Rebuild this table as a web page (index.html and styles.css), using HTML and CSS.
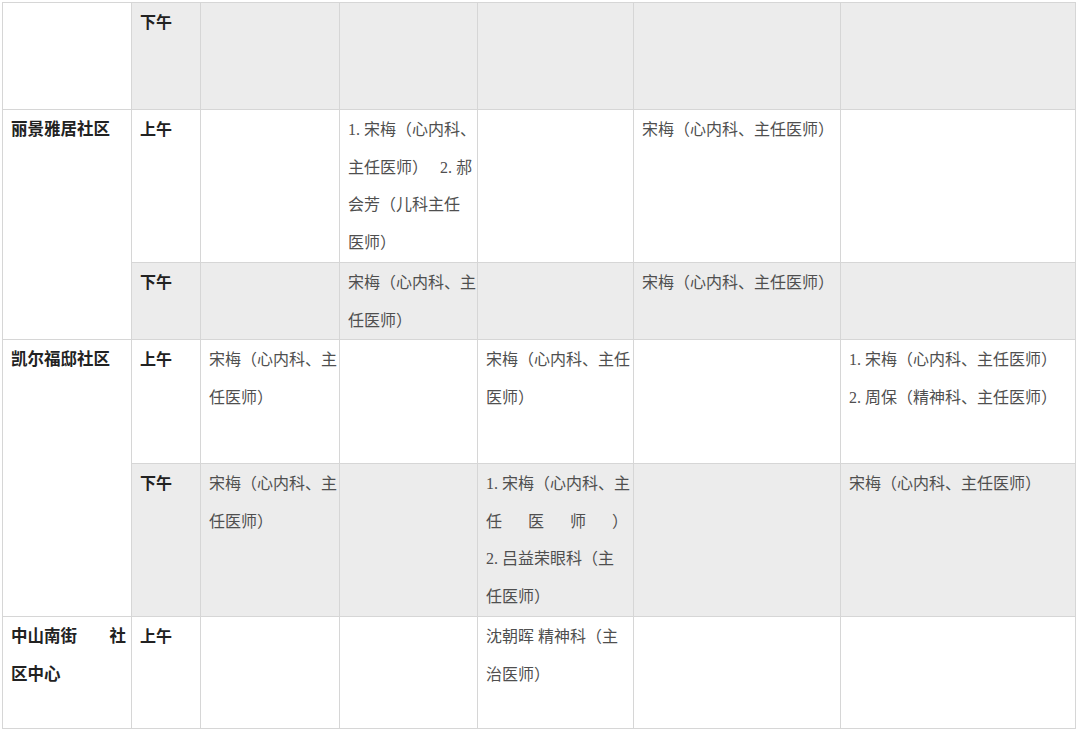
FILE: index.html
```html
<!DOCTYPE html>
<html lang="zh-CN">
<head>
<meta charset="utf-8">
<title>排班表</title>
<link rel="stylesheet" href="styles.css">
</head>
<body>
<table class="sched">
  <colgroup>
    <col class="c1"><col class="c2"><col class="c3"><col class="c4"><col class="c5"><col class="c6"><col class="c7">
  </colgroup>
  <tbody>
    <tr class="r1 pm">
      <td class="blank"></td>
      <td class="half">下午</td>
      <td></td><td></td><td></td><td></td><td></td>
    </tr>
    <tr class="r2">
      <td class="name" rowspan="2">丽景雅居社区</td>
      <td class="half">上午</td>
      <td></td>
      <td>1. 宋梅（心内科、<br><span class="spread"><span>主任医师）</span><span>2. 郝</span></span>会芳（儿科主任<br>医师）</td>
      <td></td>
      <td>宋梅（心内科、主任医师）</td>
      <td></td>
    </tr>
    <tr class="r3 pm">
      <td class="half">下午</td>
      <td></td>
      <td>宋梅（心内科、主<br>任医师）</td>
      <td></td>
      <td>宋梅（心内科、主任医师）</td>
      <td></td>
    </tr>
    <tr class="r4">
      <td class="name" rowspan="2">凯尔福邸社区</td>
      <td class="half">上午</td>
      <td>宋梅（心内科、主<br>任医师）</td>
      <td></td>
      <td>宋梅（心内科、主任<br>医师）</td>
      <td></td>
      <td>1. 宋梅（心内科、主任医师）<br>2. 周保（精神科、主任医师）</td>
    </tr>
    <tr class="r5 pm">
      <td class="half">下午</td>
      <td>宋梅（心内科、主<br>任医师）</td>
      <td></td>
      <td>1. 宋梅（心内科、主<br><span class="spread"><span>任</span><span>医</span><span>师</span><span>）</span></span>2. 吕益荣眼科（主<br>任医师）</td>
      <td></td>
      <td>宋梅（心内科、主任医师）</td>
    </tr>
    <tr class="r6">
      <td class="name"><span class="spread"><span>中山南街</span><span>社</span></span>区中心</td>
      <td class="half">上午</td>
      <td></td>
      <td></td>
      <td>沈朝晖 精神科（主<br>治医师）</td>
      <td></td>
      <td></td>
    </tr>
  </tbody>
</table>
</body>
</html>
```

FILE: styles.css
```css
html, body {
  margin: 0;
  padding: 0;
  background: #ffffff;
}

.sched {
  margin: 2px 0 0 2px;
  width: 1073px;
  table-layout: fixed;
  border-collapse: collapse;
  font-family: "Liberation Serif", "Noto Sans CJK SC", serif;
  font-size: 16px;
  line-height: 37.5px;
  color: #4f4f4f;
  text-spacing-trim: space-all;
}

.c1 { width: 129px; }
.c2 { width: 69px; }
.c3 { width: 139px; }
.c4 { width: 138px; }
.c5 { width: 156px; }
.c6 { width: 207px; }
.c7 { width: 235px; }

.sched td {
  border: 1px solid #d6d6d6;
  vertical-align: top;
  padding: 1px 5px 0 8px;
  white-space: nowrap;
}

.sched tr.pm td {
  background: #ececec;
}

.sched tr.pm td.blank,
.sched tr td.name {
  background: #ffffff;
}

.r1 { height: 107px; }
.r2 { height: 153px; }
.r3 { height: 77px; }
.r4 { height: 124px; }
.r5 { height: 153px; }
.r6 { height: 112px; }

.half,
.name {
  font-weight: 700;
  color: #222222;
}

.name {
  font-size: 16.5px;
}

.spread {
  display: flex;
  justify-content: space-between;
}
```
